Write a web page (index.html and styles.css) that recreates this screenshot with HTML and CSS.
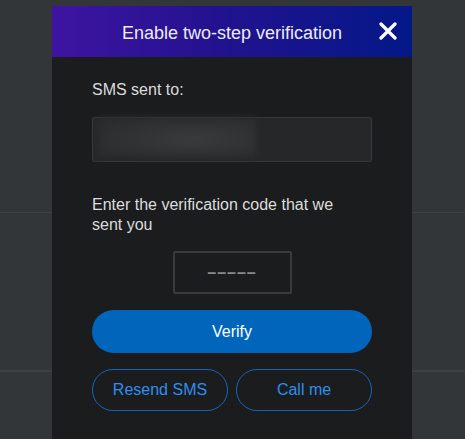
FILE: index.html
```html
<!DOCTYPE html>
<html lang="en">
<head>
  <meta charset="UTF-8">
  <meta name="viewport" content="width=device-width, initial-scale=1.0">
  <title>Two-step verification</title>
  <link rel="stylesheet" href="styles.css">
</head>
<body>

  <!-- Page behind the dialog -->
  <div class="backdrop">
    <div class="backdrop-row row-top"></div>
    <div class="backdrop-row row-mid"></div>
    <div class="backdrop-row"></div>
  </div>

  <!-- Verification dialog -->
  <div class="dialog">
    <div class="dialog-header">
      <h2 class="dialog-title">Enable two-step verification</h2>
      <button class="close-btn" aria-label="Close">
        <svg width="18" height="18" viewBox="0 0 18 18">
          <path d="M2 2 L16 16 M16 2 L2 16" stroke="#ffffff" stroke-width="3.2" stroke-linecap="round"/>
        </svg>
      </button>
    </div>

    <div class="dialog-body">
      <label class="field-label">SMS sent to:</label>
      <div class="phone-box">
        <div class="phone-blur"></div>
      </div>

      <p class="code-hint">Enter the verification code that we sent you</p>

      <div class="code-wrap">
        <input class="code-input" type="text" placeholder="–––––" maxlength="5">
      </div>

      <button class="btn btn-primary">Verify</button>

      <div class="btn-row">
        <button class="btn btn-outline">Resend SMS</button>
        <button class="btn btn-outline">Call me</button>
      </div>
    </div>
  </div>

</body>
</html>
```

FILE: styles.css
```css
/* General Styles */
body {
  margin: 0;
  font-family: "Liberation Sans", Arial, sans-serif;
  background-color: #323639;
  height: 439px;
  overflow: hidden;
}

/* Backdrop rows */
.backdrop-row {
  border-bottom: 1px solid #3e4044;
}

.row-top {
  height: 212px;
}

.row-mid {
  height: 157px;
}

/* Dialog */
.dialog {
  position: absolute;
  top: 6px;
  left: 52px;
  width: 360px;
  height: 433px;
  background-color: #1b1c1e;
}

.dialog-header {
  position: relative;
  height: 51px;
  box-sizing: border-box;
  padding-top: 3px;
  display: flex;
  align-items: center;
  justify-content: center;
  background: linear-gradient(90deg, #3e14a1 0%, #23128f 45%, #031888 100%);
}

.dialog-title {
  margin: 0;
  font-size: 18px;
  font-weight: normal;
  color: #ecebf5;
}

.close-btn {
  position: absolute;
  top: 16px;
  right: 15px;
  width: 18px;
  height: 18px;
  padding: 0;
  border: none;
  background: none;
  cursor: pointer;
}

.close-btn svg {
  display: block;
}

.dialog-body {
  padding: 24px 40px 0;
  display: flex;
  flex-direction: column;
}

.field-label {
  font-size: 16px;
  color: #dcdcdc;
}

.phone-box {
  margin-top: 18px;
  height: 43px;
  border: 1px solid #37383b;
  border-radius: 2px;
  background-color: #262729;
  padding: 0 0 0 5px;
}

.phone-blur {
  width: 158px;
  height: 40px;
  margin-top: -1px;
  background: radial-gradient(ellipse at 60% 55%, #3a3b3b 0%, #313233 45%, #282a2b 100%);
  filter: blur(3px);
}

.code-hint {
  margin: 33px 0 0;
  padding-right: 30px;
  font-size: 16px;
  line-height: 20px;
  color: #dcdcdc;
}

.code-wrap {
  margin-top: 16px;
  display: flex;
  justify-content: center;
}

.code-input {
  width: 119px;
  height: 43px;
  box-sizing: border-box;
  border: 2px solid #3a3b3d;
  border-radius: 2px;
  background-color: #1b1c1e;
  font-family: "Liberation Sans", Arial, sans-serif;
  font-size: 16px;
  text-align: center;
  color: #dcdcdc;
  letter-spacing: 1px;
}

.code-input::placeholder {
  color: #8a8a8a;
  font-weight: bold;
}

.btn {
  height: 43px;
  border-radius: 22px;
  font-family: "Liberation Sans", Arial, sans-serif;
  font-size: 16px;
  cursor: pointer;
}

.btn-primary {
  margin-top: 16px;
  border: none;
  background-color: #0065bb;
  color: #ffffff;
}

.btn-row {
  margin-top: 16px;
  display: flex;
  gap: 8px;
}

.btn-outline {
  flex: 1;
  height: 42px;
  border: 1px solid #1565c0;
  background-color: transparent;
  color: #2d8ff0;
}
```
